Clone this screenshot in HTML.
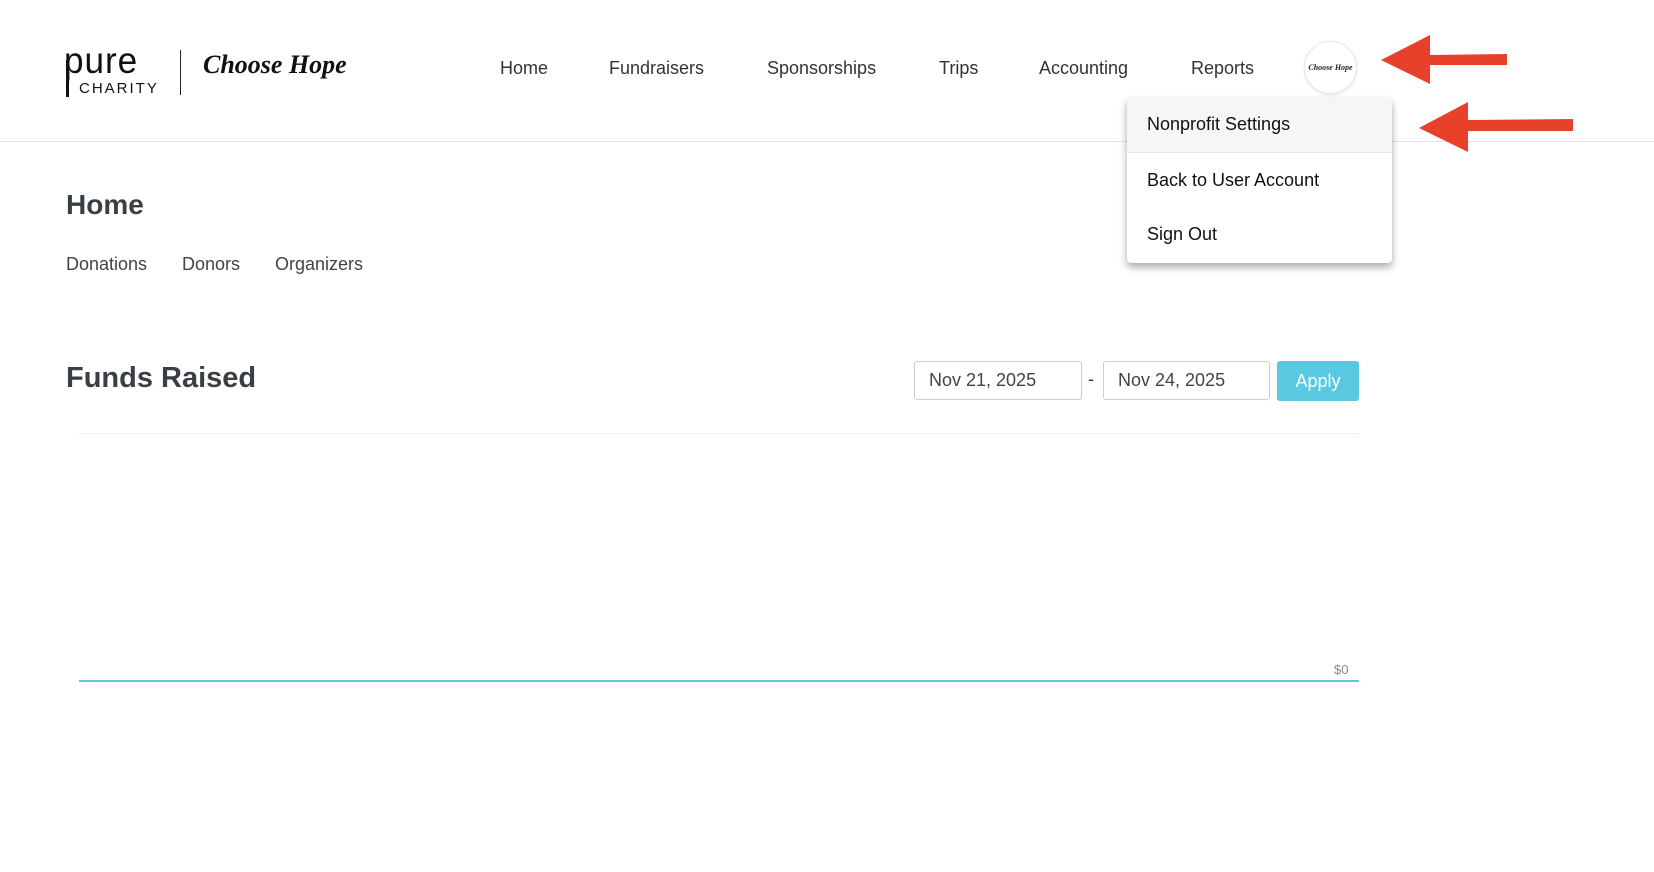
<!DOCTYPE html>
<html><head><meta charset="utf-8"><style>
*{margin:0;padding:0;box-sizing:border-box}
body{width:1654px;height:872px;background:#fff;font-family:"Liberation Sans",Arial,sans-serif;color:#333;position:relative;overflow:hidden}
.a{position:absolute;white-space:nowrap}
.nav{top:58px;font-size:18px;color:#333}
.hdr{position:absolute;left:0;top:141px;width:1654px;height:1px;background:#e3e3e3}
.inp{position:absolute;top:361px;height:39px;border:1px solid #ccc;border-radius:3px;font-size:18px;padding:8px 14px;color:#444}
.dd{position:absolute;left:1127px;top:98px;width:265px;height:165px;background:#fff;border-radius:4px;box-shadow:0 4px 8px rgba(0,0,0,.35);overflow:hidden}
.dd div{position:absolute;left:0;width:265px;font-size:18px;color:#111;padding-left:20px}
</style></head><body>
<div class="a" style="left:64px;top:42px;font-size:37px;font-weight:300;letter-spacing:1px;color:#111;line-height:37px;transform:scaleX(.95);transform-origin:left">pure</div>
<div class="a" style="left:66px;top:60px;width:3px;height:37px;background:#111"></div>
<div class="a" style="left:79px;top:80px;font-size:15px;letter-spacing:2px;color:#111">CHARITY</div>
<div class="a" style="left:180px;top:50px;width:1px;height:45px;background:#222"></div>
<div class="a" style="left:203px;top:50px;font-family:'Liberation Serif',serif;font-style:italic;font-weight:bold;font-size:26px;color:#111">Choose Hope</div>
<div class="a nav" style="left:500px">Home</div>
<div class="a nav" style="left:609px">Fundraisers</div>
<div class="a nav" style="left:767px">Sponsorships</div>
<div class="a nav" style="left:939px">Trips</div>
<div class="a nav" style="left:1039px">Accounting</div>
<div class="a nav" style="left:1191px">Reports</div>
<div class="a" style="left:1304px;top:41px;width:53px;height:53px;border-radius:50%;border:1px solid #e6e6e6;box-shadow:0 1px 3px rgba(0,0,0,.1);text-align:center;line-height:51px;font-family:'Liberation Serif',serif;font-style:italic;font-weight:bold;font-size:8px;color:#222">Choose Hope</div>
<div class="hdr"></div>
<div class="a" style="left:66px;top:189px;font-size:28px;font-weight:bold;color:#3a3f45">Home</div>
<div class="a" style="left:66px;top:254px;font-size:18px;color:#444">Donations</div>
<div class="a" style="left:182px;top:254px;font-size:18px;color:#444">Donors</div>
<div class="a" style="left:275px;top:254px;font-size:18px;color:#444">Organizers</div>
<div class="a" style="left:66px;top:362px;font-size:29px;font-weight:bold;color:#3a3f45">Funds Raised</div>
<div class="inp" style="left:914px;width:168px">Nov 21, 2025</div>
<div class="a" style="left:1088px;top:369px;font-size:18px">-</div>
<div class="inp" style="left:1103px;width:167px">Nov 24, 2025</div>
<div class="a" style="left:1277px;top:361px;width:82px;height:40px;background:#5bc8e2;border-radius:3px;color:#fff;font-size:18px;text-align:center;line-height:40px">Apply</div>
<div class="a" style="left:79px;top:433px;width:1280px;height:1px;background:#eee"></div>
<div class="a" style="left:79px;top:680px;width:1280px;height:2px;background:#5bc8e2"></div>
<div class="a" style="left:1334px;top:662px;font-size:13px;color:#888">$0</div>
<div class="dd">
<div style="top:0;height:55px;background:#f6f6f6;border-bottom:1px solid #e8e8e8;line-height:52px">Nonprofit Settings</div>
<div style="top:56px;height:54px;line-height:52px">Back to User Account</div>
<div style="top:110px;height:55px;line-height:52px">Sign Out</div>
</div>
<svg class="a" style="left:0;top:0" width="1654" height="872">
<polygon points="1381,60 1430,35 1430,55 1507,54 1507,65 1430,65 1430,84" fill="#e8412b"/>
<polygon points="1419,128 1468,102 1468,120 1573,119 1573,131 1468,131 1468,152" fill="#e8412b"/>
</svg>
</body></html>
